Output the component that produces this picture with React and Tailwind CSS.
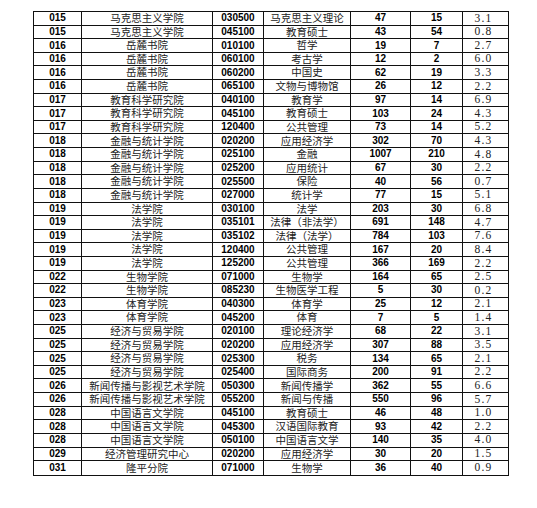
const ROWS = [
  ["015", "马克思主义学院", "030500", "马克思主义理论", "47", "15", "3.1"],
  ["015", "马克思主义学院", "045100", "教育硕士", "43", "54", "0.8"],
  ["016", "岳麓书院", "010100", "哲学", "19", "7", "2.7"],
  ["016", "岳麓书院", "060100", "考古学", "12", "2", "6.0"],
  ["016", "岳麓书院", "060200", "中国史", "62", "19", "3.3"],
  ["016", "岳麓书院", "065100", "文物与博物馆", "26", "12", "2.2"],
  ["017", "教育科学研究院", "040100", "教育学", "97", "14", "6.9"],
  ["017", "教育科学研究院", "045100", "教育硕士", "103", "24", "4.3"],
  ["017", "教育科学研究院", "120400", "公共管理", "73", "14", "5.2"],
  ["018", "金融与统计学院", "020200", "应用经济学", "302", "70", "4.3"],
  ["018", "金融与统计学院", "025100", "金融", "1007", "210", "4.8"],
  ["018", "金融与统计学院", "025200", "应用统计", "67", "30", "2.2"],
  ["018", "金融与统计学院", "025500", "保险", "40", "56", "0.7"],
  ["018", "金融与统计学院", "027000", "统计学", "77", "15", "5.1"],
  ["019", "法学院", "030100", "法学", "203", "30", "6.8"],
  ["019", "法学院", "035101", "法律（非法学）", "691", "148", "4.7"],
  ["019", "法学院", "035102", "法律（法学）", "784", "103", "7.6"],
  ["019", "法学院", "120400", "公共管理", "167", "20", "8.4"],
  ["019", "法学院", "125200", "公共管理", "366", "169", "2.2"],
  ["022", "生物学院", "071000", "生物学", "164", "65", "2.5"],
  ["022", "生物学院", "085230", "生物医学工程", "5", "30", "0.2"],
  ["023", "体育学院", "040300", "体育学", "25", "12", "2.1"],
  ["023", "体育学院", "045200", "体育", "7", "5", "1.4"],
  ["025", "经济与贸易学院", "020100", "理论经济学", "68", "22", "3.1"],
  ["025", "经济与贸易学院", "020200", "应用经济学", "307", "88", "3.5"],
  ["025", "经济与贸易学院", "025300", "税务", "134", "65", "2.1"],
  ["025", "经济与贸易学院", "025400", "国际商务", "200", "91", "2.2"],
  ["026", "新闻传播与影视艺术学院", "050300", "新闻传播学", "362", "55", "6.6"],
  ["026", "新闻传播与影视艺术学院", "055200", "新闻与传播", "550", "96", "5.7"],
  ["028", "中国语言文学院", "045100", "教育硕士", "46", "48", "1.0"],
  ["028", "中国语言文学院", "045300", "汉语国际教育", "93", "42", "2.2"],
  ["028", "中国语言文学院", "050100", "中国语言文学", "140", "35", "4.0"],
  ["029", "经济管理研究中心", "020200", "应用经济学", "30", "20", "1.5"],
  ["031", "隆平分院", "071000", "生物学", "36", "40", "0.9"],
];

const num = "font-['Liberation_Sans',Arial,sans-serif] font-bold text-[10px] text-black";
const cjk = "font-['Noto_Sans_CJK_SC',sans-serif] text-[10.5px] text-[#222]";
const ratio = "font-['Liberation_Serif',serif] text-[11.5px] tracking-[1.2px] text-[#222]";
const cell = "flex items-center justify-center leading-none whitespace-nowrap border-r border-[#111]";

export default function App() {
  return (
    <div className="w-[537px] h-[508px] bg-white pt-[11px] pl-[33px]">
      <div className="w-[476px] border-[1.5px] border-[#111]">
        {ROWS.map((r, i) => (
          <div
            key={i}
            className={`grid grid-cols-[48px_131px_51px_87px_60px_52px_1fr] h-[13.62px] ${
              i < ROWS.length - 1 ? "border-b border-[#111]" : ""
            }`}
          >
            <div className={`${cell} ${num}`}>{r[0]}</div>
            <div className={`${cell} ${cjk}`}>{r[1]}</div>
            <div className={`${cell} ${num}`}>{r[2]}</div>
            <div className={`${cell} ${cjk}`}>{r[3]}</div>
            <div className={`${cell} ${num}`}>{r[4]}</div>
            <div className={`${cell} ${num}`}>{r[5]}</div>
            <div className={`flex items-center justify-center leading-none pr-[4px] ${ratio}`}>{r[6]}</div>
          </div>
        ))}
      </div>
    </div>
  );
}
